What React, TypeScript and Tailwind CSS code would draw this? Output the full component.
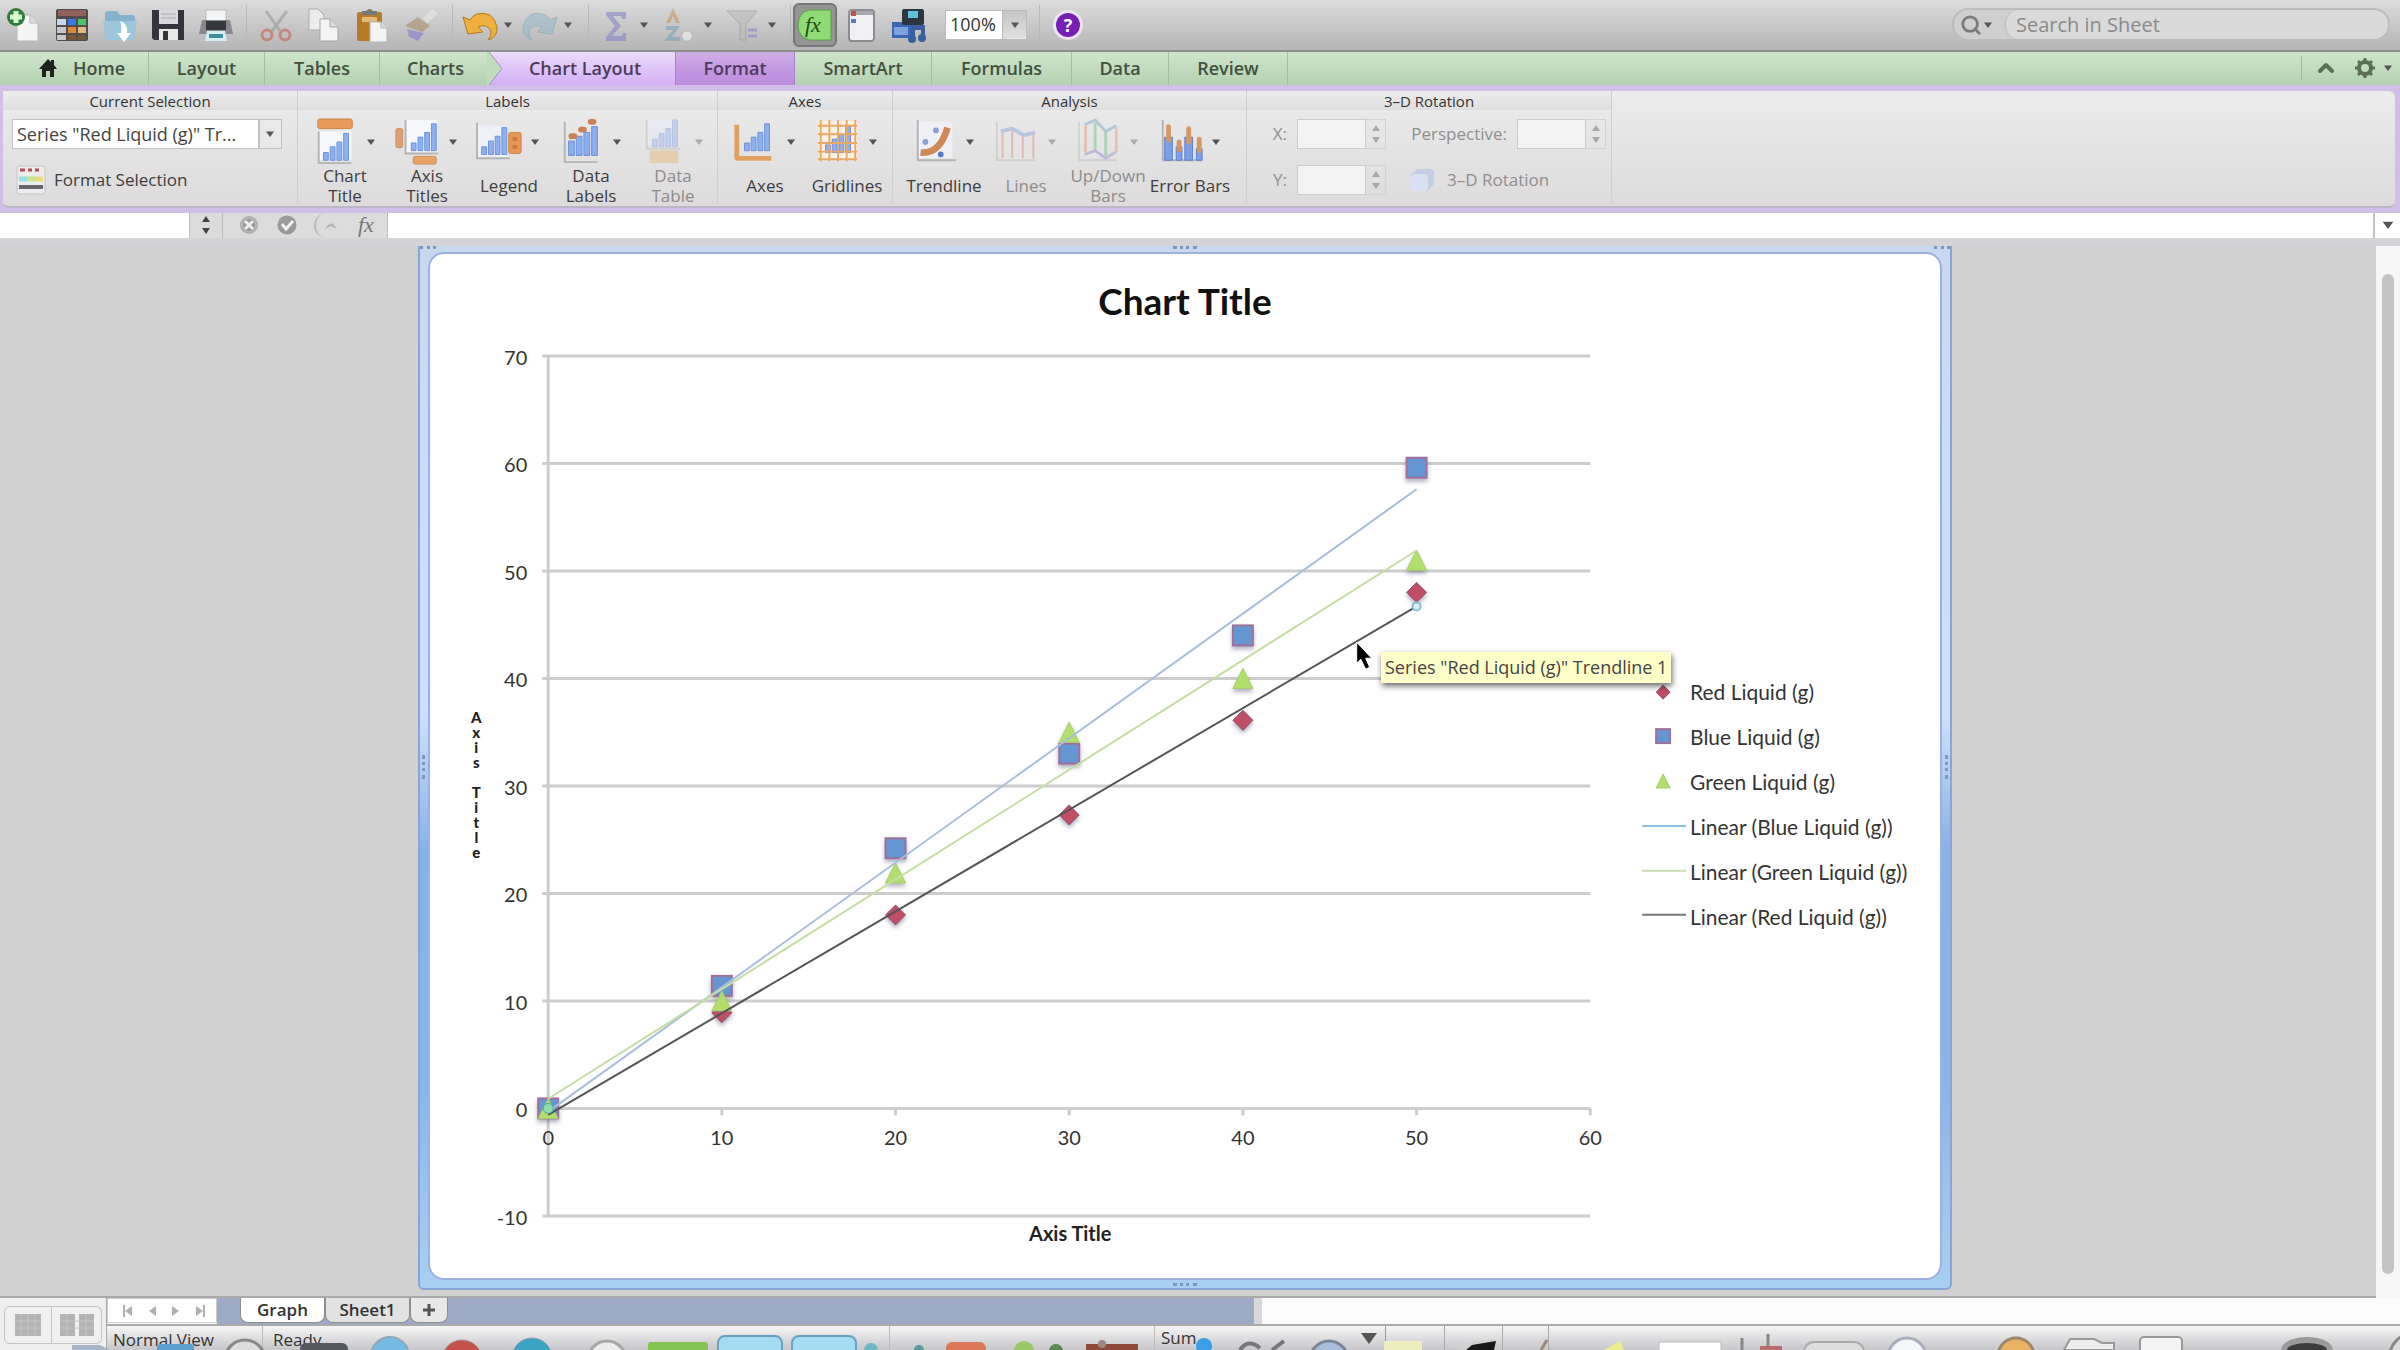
import type { ReactNode } from "react";
import { ChevronUp, Search } from "lucide-react";

const Caret = ({ className = "" }: { className?: string }) => (
  <svg viewBox="0 0 8 6" className={`w-2 h-1.5 shrink-0 ${className}`}>
    <path d="M0 0.5h8L4 6z" fill="#555" />
  </svg>
);

const Steps = ({ className = "" }: { className?: string }) => (
  <svg viewBox="0 0 8 20" className={`w-2 h-5 shrink-0 ${className}`}>
    <path d="M0 7h8L4 1zM0 13h8L4 19z" fill="currentColor" />
  </svg>
);

const Icon = ({ children, faded }: { children: ReactNode; faded?: boolean }) => (
  <svg viewBox="0 0 36 36" className={faded ? "w-9 h-9 shrink-0 opacity-50" : "w-9 h-9 shrink-0"}>
    {children}
  </svg>
);

const Sep = ({ className }: { className: string }) => (
  <div className={`flex justify-center shrink-0 ${className}`}>
    <div className="w-px h-10 bg-[#b9b9b9]" />
  </div>
);

/* ---------- standard toolbar ---------- */

function Tool({ label, children }: { label: string; children: ReactNode }) {
  return (
    <button type="button" aria-label={label} className="w-12 h-12 shrink-0 flex items-center justify-center">
      {children}
    </button>
  );
}

function MenuTool({ label, children, wide }: { label: string; children: ReactNode; wide?: boolean }) {
  return (
    <button type="button" aria-label={label} className="h-12 shrink-0 flex items-center">
      <span className="w-10 flex justify-center">{children}</span>
      <span className={wide ? "w-6 pr-2 flex justify-center" : "w-5 pr-1 flex justify-center"}>
        <Caret />
      </span>
    </button>
  );
}

function Toolbar() {
  return (
    <header className="h-[52px] flex items-center border-b-2 border-[#8d918d] bg-linear-to-b from-[#dcdcdc] to-[#b5b5b5]">
      <Tool label="New">
        <Icon>
          <path d="M11 8h13l8 8v18H11z" fill="#f4f4f4" stroke="#b8b8b8" />
          <path d="M24 8v8h8" fill="#ddd" stroke="#b8b8b8" />
          <circle cx="10" cy="10" r="9" fill="#2f7a3c" />
          <path d="M10 4v12M4 10h12" stroke="#d6ffd0" strokeWidth="5" />
        </Icon>
      </Tool>
      <Tool label="Gallery">
        <Icon>
          <rect x="2" y="2" width="32" height="32" rx="2" fill="#514d4b" />
          <path d="M4 3h28v6H4z" fill="#93605c" />
          <path d="M3 12h9v6H3z" fill="#c9d6f4" />
          <path d="M14 12h8v6h-8z" fill="#3d78e8" />
          <path d="M24 12h8v6h-8z" fill="#47c768" />
          <path d="M3 20h9v6H3zM3 28h9v5H3z" fill="#c8c8cc" />
          <path d="M14 20h8v6h-8z" fill="#d9873c" />
          <path d="M24 20h8v6h-8z" fill="#e6b878" />
          <path d="M14 28h8v5h-8zM24 28h8v5h-8z" fill="#77573a" />
        </Icon>
      </Tool>
      <Tool label="Open">
        <Icon>
          <path d="M3 7q0-3 3-3h9l3 4h12q3 0 3 3v20H3z" fill="#85b3cd" />
          <path d="M1 14h34l-3 19H4z" fill="#9cc6dc" />
          <path d="M18 14q8 2 7 12h4l-7 9-7-9h4q1-7-1-12z" fill="#fff" />
        </Icon>
      </Tool>
      <Tool label="Save">
        <Icon>
          <path d="M2 3h32v30H4l-2-2z" fill="#35343a" />
          <path d="M9 3h19v14H9z" fill="#d9d9dd" />
          <path d="M11 7h15M11 11h15" stroke="#aaa" />
          <path d="M9 22h19v11H9z" fill="#e8e8e8" />
          <path d="M13 24h5v9h-5z" fill="#35343a" />
        </Icon>
      </Tool>
      <Tool label="Print">
        <Icon>
          <path d="M8 3h20v12H8z" fill="#f6f6f6" stroke="#bbb" />
          <path d="M4 13h28l3 14H1z" fill="#87898c" />
          <path d="M8 14h20v9H8z" fill="#35383b" />
          <path d="M9 24h18l2 10H7z" fill="#d9eef4" />
          <path d="M11 27h14v4H11z" fill="#3d8fa0" />
        </Icon>
      </Tool>
      <Sep className="w-3" />
      <Tool label="Cut">
        <Icon faded>
          <path d="M8 4l14 20M29 4L14 24" stroke="#909090" strokeWidth="3" />
          <circle cx="9" cy="28" r="5" fill="none" stroke="#c8503c" strokeWidth="3" />
          <circle cx="27" cy="28" r="5" fill="none" stroke="#c8503c" strokeWidth="3" />
        </Icon>
      </Tool>
      <Tool label="Copy">
        <Icon>
          <path d="M3 2h9l6 6v15H3z" fill="#ececec" stroke="#aaa" />
          <path d="M14 12h10l8 8v14H14z" fill="#f4f4f4" stroke="#a5a5a5" />
          <path d="M24 12v8h8" fill="#ddd" stroke="#a5a5a5" />
        </Icon>
      </Tool>
      <Tool label="Paste">
        <Icon>
          <rect x="3" y="5" width="25" height="29" rx="2" fill="#b97a26" />
          <path d="M8 8h15v-4h-4q-3-4-7 0H8z" fill="#777" />
          <path d="M8 10h15v5H8z" fill="#e0ba76" />
          <path d="M16 15h11l6 6v14H16z" fill="#f4f4f4" stroke="#b5b5b5" />
          <path d="M27 15v6h6" fill="#ddd" stroke="#b5b5b5" />
        </Icon>
      </Tool>
      <Tool label="Format painter">
        <Icon faded>
          <path d="M33 4L23 14" stroke="#eee" strokeWidth="7" />
          <path d="M16 10l12 9-8 6L3 19z" fill="#a08058" />
          <path d="M5 22l17 4-6 8-9-4z" fill="#7f6ad0" />
        </Icon>
      </Tool>
      <Sep className="w-4" />
      <MenuTool label="Undo">
        <Icon>
          <path d="M1 10l5 17 15-2-5-5q9-4 13 4 1 5-3 9 10-3 9-13Q31 3 15 7q-5 2-7 6z" fill="#f0b040" stroke="#b97814" />
        </Icon>
      </MenuTool>
      <MenuTool label="Redo">
        <Icon faded>
          <path d="M35 10l-5 17-15-2 5-5q-9-4-13 4-1 5 3 9-10-3-9-13Q5 3 21 7q5 2 7 6z" fill="#8fb8cb" stroke="#6f9fb6" />
        </Icon>
      </MenuTool>
      <Sep className="w-4" />
      <MenuTool label="AutoSum" wide>
        <Icon faded>
          <path d="M8 5h20v7h-4l-1-3H15l8 10-9 10h10l1-3h3v8H8v-4l9-11L8 8z" fill="#7d78c8" />
        </Icon>
      </MenuTool>
      <MenuTool label="Sort" wide>
        <Icon faded>
          <path d="M4 16L11 1l7 15h-4l-3-7-3 7z" fill="#c88a50" />
          <path d="M4 19h14l-8 11h8v4H2l9-11H4z" fill="#6f9fb6" />
          <path d="M22 24h6l3 5-3 5h-6l-3-5z" fill="#fff" stroke="#aaa" />
        </Icon>
      </MenuTool>
      <MenuTool label="Filter" wide>
        <Icon faded>
          <path d="M1 4h30L20 17v16h-6V17z" fill="#b9b9b9" stroke="#888" />
          <path d="M22 23h9M22 29h9" stroke="#8078c8" strokeWidth="3" />
        </Icon>
      </MenuTool>
      <div className="w-px h-10 mx-0.5 bg-[#b9b9b9]" />
      <button type="button" aria-label="Formula Builder" className="w-11 h-11 rounded-md border-2 border-[#777] bg-[#949494] flex items-center justify-center">
        <svg viewBox="0 0 36 32" className="w-9 h-8">
          <path d="M12 1h22v30H12Q1 28 1 16T12 1z" fill="#8fdb74" stroke="#5d9a48" />
          <text x="8" y="23" fontFamily="Liberation Serif, serif" fontStyle="italic" fontSize="22" fill="#234a1c">fx</text>
        </svg>
      </button>
      <Tool label="Toolbox">
        <Icon>
          <rect x="6" y="3" width="25" height="31" rx="3" fill="#f1f1f4" stroke="#8c8c92" strokeWidth="2" />
          <path d="M6 4h24v4H6z" fill="#a8a8b0" />
          <path d="M8 4h5v5H8z" fill="#c0504d" />
          <path d="M8 12h5v4H8z" fill="#5a78c8" />
        </Icon>
      </Tool>
      <Tool label="Media Browser">
        <Icon>
          <rect x="1" y="15" width="22" height="16" fill="#3a66b4" />
          <rect x="11" y="2" width="22" height="16" rx="2" fill="#2b3640" />
          <rect x="17" y="4" width="10" height="7" fill="#5cc4d8" />
          <path d="M3 20h14v8H3z" fill="#7fa3dd" />
          <path d="M20 18h14v13h-4v-8h-6v9h-4z" fill="#3a5f9c" />
          <circle cx="21" cy="32" r="4" fill="#3a5f9c" />
          <circle cx="31" cy="31" r="4" fill="#3a5f9c" />
        </Icon>
      </Tool>
      <div className="flex items-center ml-3 h-[30px] bg-white border border-[#bbb]">
        <input aria-label="Zoom" defaultValue="100%" className="w-[56px] px-1 text-[18px] text-[#333] outline-none" />
        <button type="button" aria-label="Zoom menu" className="w-6 h-full flex items-center justify-center border-l border-[#bbb] bg-linear-to-b from-[#c4c4c4] to-[#e2e2e2]">
          <Caret />
        </button>
      </div>
      <Sep className="w-6" />
      <button type="button" aria-label="Help" className="ml-0.5 w-[30px] h-[30px] rounded-full border-3 border-[#efe4f7] bg-[#7420b4] text-white text-[18px] leading-none font-bold">
        ?
      </button>
      <div className="ml-auto mr-[10px] flex items-center w-[438px] h-[33px] rounded-full border-2 border-[#bcbcbc] bg-[#cfcfcf]">
        <Search className="ml-1.5 w-[22px] h-[22px] text-[#7b7b7b]" strokeWidth={3} />
        <Caret className="ml-0.5 mr-3" />
        <input
          aria-label="Search in Sheet"
          placeholder="Search in Sheet"
          className="grow min-w-0 h-full rounded-full bg-[#dadada] border-l-2 border-[#c2c2c2] pl-2.5 text-[20px] placeholder:text-[#8a8a8a] outline-none"
        />
      </div>
    </header>
  );
}

/* ---------- ribbon tabs ---------- */

const GREEN = "h-full shrink-0 border-r border-[#a3bf9f] flex items-center justify-center";

function Tabs() {
  return (
    <nav className="h-[33px] flex items-center bg-linear-to-b from-[#d0e5cb] to-[#b2d2b0] text-[18px] font-semibold text-[#41503f]">
      <button type="button" className={`${GREEN} w-[149px] gap-4 pl-4`}>
        <svg viewBox="0 0 18 18" className="w-[18px] h-[18px]">
          <path d="M9 0L0 10h3v8h4v-6h4v6h4v-8h3l-3-4V1h-3v2z" fill="#1c241b" />
        </svg>
        Home
      </button>
      <button type="button" className={`${GREEN} w-[116px]`}>Layout</button>
      <button type="button" className={`${GREEN} w-[115px]`}>Tables</button>
      <button type="button" className="h-full w-[107px] shrink-0 pl-1">Charts</button>
      <button type="button" className="h-full w-[188px] shrink-0 pr-2 flex items-center bg-linear-to-b from-[#ecdcfa] to-[#d3aff5] text-[#4c3a5c]">
        <svg viewBox="0 0 16 33" className="w-4 h-[33px]">
          <path d="M0 0h2l13 16.500L2 33H0z" fill="#bfdcbb" />
          <path d="M2 0l13 16.500L2 33" fill="none" stroke="#a58fc0" />
        </svg>
        <span className="grow">Chart Layout</span>
      </button>
      <button type="button" className="h-full w-[120px] shrink-0 border-x border-[#a882c8] bg-linear-to-b from-[#cfaee6] via-[#c49ae2] to-[#ba8cde] text-[#4c3a5c]">
        Format
      </button>
      <button type="button" className={`${GREEN} w-[137px]`}>SmartArt</button>
      <button type="button" className={`${GREEN} w-[140px]`}>Formulas</button>
      <button type="button" className={`${GREEN} w-[97px]`}>Data</button>
      <button type="button" className={`${GREEN} w-[119px]`}>Review</button>
      <div className="ml-auto flex items-center h-full">
        <button type="button" aria-label="Collapse ribbon" className="h-6 px-3 border-l border-[#9dbb9a]">
          <ChevronUp className="w-6 h-6 text-[#5b6f58]" strokeWidth={4} />
        </button>
        <button type="button" aria-label="Ribbon preferences" className="ml-1 flex items-center gap-2 pr-2">
          <svg viewBox="0 0 22 22" className="w-[22px] h-[22px]" fill="none" stroke="#5b6f58">
            <circle cx="11" cy="11" r="6" strokeWidth="4" />
            <path d="M11 1v4M11 17v4M1 11h4M17 11h4M4 4l3 3M15 15l3 3M18 4l-3 3M7 15l-3 3" strokeWidth="3" />
          </svg>
          <Caret />
        </button>
      </div>
    </nav>
  );
}

/* ---------- ribbon ---------- */

const Bars = ({ x = 0, y = 0 }: { x?: number; y?: number }) => (
  <g transform={`translate(${x} ${y})`} fill="#8fb0ee" stroke="#6a90dc">
    <path d="M1 22h5v8H1z" />
    <path d="M8 16h5v14H8z" />
    <path d="M15 11h5v19h-5z" />
    <path d="M22 2h5v28h-5z" />
  </g>
);

const Frame = ({ d }: { d: string }) => <path d={d} fill="none" stroke="#b4b4b4" strokeWidth="2" />;

const ICONS: Record<string, ReactNode> = {
  chartTitle: (
    <>
      <rect x="6" y="1" width="36" height="10" rx="2" fill="#e89c5c" stroke="#d08444" />
      <path d="M7 14h34v30H7z" fill="#f6f8fc" />
      <Frame d="M7 14v33h34" />
      <Bars x={11} y={14} />
    </>
  ),
  axisTitles: (
    <>
      <rect x="2" y="11" width="7" height="20" rx="2" fill="#e0a070" stroke="#c89068" />
      <path d="M13 2h32v34H13z" fill="#f6f8fc" />
      <Frame d="M12 2v35h34" />
      <Bars x={17} y={4} />
      <rect x="20" y="40" width="24" height="8" rx="2" fill="#e8a468" stroke="#d08c54" />
    </>
  ),
  legend: (
    <>
      <path d="M1 8h32v34H1z" fill="#eef1f8" />
      <Frame d="M1 5v37h34" />
      <Bars x={5} y={8} />
      <rect x="34" y="15" width="13" height="22" rx="2" fill="#e49858" stroke="#d08848" />
      <path d="M38 20h5v4h-5zM38 28h5v4h-5z" fill="#c8763c" />
    </>
  ),
  dataLabels: (
    <>
      <Frame d="M7 4v42h34" />
      <path d="M11 24h6v15h-6zM19 19h6v20h-6zM27 15h6v24h-6zM35 9h6v30h-6z" fill="#8aaeee" stroke="#6a90dc" />
      <g fill="#cc8058">
        <rect x="11" y="16" width="9" height="6" rx="3" />
        <rect x="21" y="9" width="9" height="6" rx="3" />
        <rect x="31" y="1" width="9" height="6" rx="3" />
      </g>
    </>
  ),
  dataTable: (
    <>
      <path d="M8 2h34v26H8z" fill="#e8eefa" />
      <Frame d="M7 2v30h35" />
      <Bars x={12} />
      <rect x="10" y="34" width="30" height="13" fill="#e8b060" />
    </>
  ),
  axes: (
    <>
      <path d="M5 7v34q0 1 1 1h35" fill="none" stroke="#e0a060" strokeWidth="5" />
      <Bars x={12} y={4} />
    </>
  ),
  gridlines: (
    <>
      <path d="M5 3h40v41H5z" fill="#fdf1e4" />
      <Bars x={11} y={6} />
      <path d="M4 8h41M4 17h41M4 26h41M4 35h41M4 43h41M7 2v43M16 2v43M25 2v43M34 2v43M43 2v43" stroke="#e8a868" strokeWidth="2" />
    </>
  ),
  trendline: (
    <>
      <path d="M7 4h36v38H7z" fill="#efeff4" />
      <Frame d="M7 2v42h40" />
      <path d="M10 36q20 2 28-26" fill="none" stroke="#cf8858" strokeWidth="7" />
      <circle cx="15" cy="25" r="3" fill="#8aa0d8" />
      <circle cx="26" cy="13" r="3" fill="#8aa0d8" />
      <circle cx="31" cy="38" r="3" fill="#5a7cd0" />
    </>
  ),
  lines: (
    <>
      <Frame d="M4 4v40h40" />
      <path d="M8 14l12-3 12 7 12-3" fill="none" stroke="#7a98d8" strokeWidth="4" />
      <path d="M10 16v26M20 13v29M31 19v23M42 17v25" stroke="#dc7868" strokeWidth="2" />
    </>
  ),
  upDown: (
    <>
      <Frame d="M4 4v40h40" />
      <path d="M10 7l11-5 11 12 11-6" fill="none" stroke="#5aa0c8" strokeWidth="3" />
      <path d="M10 38l11-4 11 8 11-7" fill="none" stroke="#8a78d0" strokeWidth="3" />
      <path d="M11 8v28M43 10v26" stroke="#e09060" strokeWidth="3" />
      <path d="M21 5v28M32 14v26" stroke="#60b878" strokeWidth="3" />
    </>
  ),
  errorBars: (
    <>
      <Frame d="M6 2v42h41" />
      <path d="M8 20h8v24H8zM20 30h6v14h-6zM29 20h8v24h-8zM41 32h6v12h-6z" fill="#7c9fe8" stroke="#5c80d0" />
      <path d="M12 9v14M23 25v8M33 11v14M44 22v12" stroke="#d69860" strokeWidth="5" strokeLinecap="round" />
    </>
  ),
};

function RibbonButton({ label, icon, disabled }: { label: ReactNode; icon: string; disabled?: boolean }) {
  return (
    <button type="button" disabled={disabled} className={disabled ? "w-[82px] shrink-0 text-[#8c8c8c]" : "w-[82px] shrink-0 text-[#3d3d3d]"}>
      <span className={disabled ? "flex items-center pl-2 opacity-40" : "flex items-center pl-2"}>
        <svg viewBox="0 0 50 50" className="w-12 h-12">{ICONS[icon]}</svg>
        <span className="w-[22px] flex justify-center">
          <Caret />
        </span>
      </span>
      <span className="h-10 flex flex-col items-center justify-center leading-5 whitespace-nowrap">{label}</span>
    </button>
  );
}

function Group({ title, className, children }: { title: string; className: string; children: ReactNode }) {
  return (
    <section className={`h-[112px] shrink-0 border-r border-[#cfcfcf] ${className}`}>
      <h2 className="h-[19px] text-center text-[15px] leading-[20px] text-[#333] bg-linear-to-b from-[#ececec] to-[#dedede]">{title}</h2>
      {children}
    </section>
  );
}

function SpinBox({ label, id }: { label: string; id: string }) {
  return (
    <>
      <label htmlFor={id} className="text-[#8f8f8f] text-right">{label}</label>
      <span className="flex items-center">
        <input id={id} disabled className="w-[69px] h-[30px] bg-[#f3f3f3] border border-[#cdcdcd]" />
        <span className="w-5 flex justify-center border border-l-0 border-[#d3d3d3] h-[30px] items-center">
          <Steps className="text-[#a8a8a8]" />
        </span>
      </span>
    </>
  );
}

function Ribbon() {
  return (
    <div className="bg-[#d2bfe9] pt-1.5 pb-[5px] pl-[3px] pr-[5px]">
      <div className="h-[117px] flex rounded-md bg-linear-to-b from-[#ececec] to-[#dddbdc] border-b-2 border-[#bdb6c4] text-[17px]">
        <Group title="Current Selection" className="w-[295px]">
          <div className="mt-[9px] ml-[9px] flex flex-col gap-4">
            <div className="relative w-[270px]">
              <select aria-label="Chart element" className="appearance-none w-full h-[30px] px-1 border border-[#c2c2c2] text-[18px] leading-[28px] text-[#444] bg-[linear-gradient(90deg,white_245px,#c4c4c4_245px,#c4c4c4_247px,#e9e9e9_247px)]">
                <option>Series "Red Liquid (g)" Tr...</option>
              </select>
              <Caret className="absolute right-2 top-3 pointer-events-none" />
            </div>
            <button type="button" className="flex items-center gap-2 px-1 text-[#3d3d3d]">
              <svg viewBox="0 0 30 30" className="w-[30px] h-[30px]">
                <rect x="1" y="1" width="28" height="28" rx="2" fill="#ececec" stroke="#c4c4c4" />
                <path d="M4 5h5M12 5h4M19 5h4" stroke="#b04a54" strokeWidth="3" />
                <path d="M3 14h8" stroke="#9adfe0" strokeWidth="5" />
                <path d="M11 14h8" stroke="#c9e28c" strokeWidth="5" />
                <path d="M19 14h8" stroke="#e8dc80" strokeWidth="5" />
                <path d="M3 22h24" stroke="#66686e" strokeWidth="4" />
              </svg>
              Format Selection
            </button>
          </div>
        </Group>
        <Group title="Labels" className="w-[420px]">
          <div className="flex pt-2 pl-1.5">
            <RibbonButton icon="chartTitle" label={<><span>Chart</span><span>Title</span></>} />
            <RibbonButton icon="axisTitles" label={<><span>Axis</span><span>Titles</span></>} />
            <RibbonButton icon="legend" label="Legend" />
            <RibbonButton icon="dataLabels" label={<><span>Data</span><span>Labels</span></>} />
            <RibbonButton icon="dataTable" label={<><span>Data</span><span>Table</span></>} disabled />
          </div>
        </Group>
        <Group title="Axes" className="w-[175px]">
          <div className="flex pt-2 pl-1.5">
            <RibbonButton icon="axes" label="Axes" />
            <RibbonButton icon="gridlines" label="Gridlines" />
          </div>
        </Group>
        <Group title="Analysis" className="w-[354px]">
          <div className="flex pt-2 pl-2.5">
            <RibbonButton icon="trendline" label="Trendline" />
            <RibbonButton icon="lines" label="Lines" disabled />
            <RibbonButton icon="upDown" label={<><span>Up/Down</span><span>Bars</span></>} disabled />
            <RibbonButton icon="errorBars" label="Error Bars" />
          </div>
        </Group>
        <Group title="3–D Rotation" className="w-[365px]">
          <div className="mt-[9px] px-1.5 grid grid-cols-[34px_90px_110px_90px] gap-x-2.5 gap-y-4 items-center">
            <SpinBox id="rot-x" label="X:" />
            <SpinBox id="perspective" label="Perspective:" />
            <SpinBox id="rot-y" label="Y:" />
            <button type="button" disabled className="col-span-2 pl-3 flex items-center gap-3 text-[#8f8f8f]">
              <svg viewBox="0 0 26 26" className="w-[26px] h-[26px]">
                <path d="M8 2h13q4 0 4 4v11l-6 7H5q-4 0-4-4V8z" fill="#c4cfe4" />
                <rect x="1" y="7" width="18" height="17" rx="4" fill="#d9e1f0" />
              </svg>
              3–D Rotation
            </button>
          </div>
        </Group>
      </div>
    </div>
  );
}

function FormulaBar() {
  return (
    <div className="h-[33px] flex border-b-8 border-[#d3d3d8] bg-[#dcdcdc]">
      <input aria-label="Name box" className="w-[189px] bg-white outline-none" />
      <button type="button" aria-label="Name box steps" className="w-[34px] flex justify-center items-center border-x border-[#bdbdbd] text-[#444]">
        <Steps />
      </button>
      <div className="w-[165px] flex items-center pl-[15px] border-r border-[#bdbdbd]">
        <button type="button" aria-label="Cancel">
          <svg viewBox="0 0 22 22" className="w-[22px] h-[22px]">
            <circle cx="11" cy="11" r="9" fill="#aaa" />
            <circle cx="11" cy="11" r="7" fill="#999" stroke="#c9c9c9" />
            <path d="M7 7l8 8M15 7l-8 8" stroke="#eee" strokeWidth="3" />
          </svg>
        </button>
        <button type="button" aria-label="Enter" className="ml-4">
          <svg viewBox="0 0 22 22" className="w-[22px] h-[22px]">
            <circle cx="11" cy="11" r="9.500" fill="#9a9a9a" />
            <path d="M6 10l4 5 7-8" fill="none" stroke="#f2f2f2" strokeWidth="3" />
          </svg>
        </button>
        <button type="button" aria-label="Functions" className="ml-4 flex items-center h-[25px] rounded-l-full border-l-2 border-[#b9b9b9] pl-2">
          <svg viewBox="0 0 14 10" className="w-3.5 h-2.5">
            <path d="M1 9Q7-2 13 9l-6-3z" fill="#b5b5b5" />
          </svg>
        </button>
        <button type="button" className="ml-5 font-['Liberation_Serif',serif] italic text-[22px] leading-none text-[#777]">fx</button>
      </div>
      <input aria-label="Formula" className="grow min-w-0 bg-white outline-none" />
      <button type="button" aria-label="Expand formula bar" className="w-[27px] flex items-center justify-center border-l-2 border-[#c4c4c4] bg-white">
        <Caret className="w-3! h-2!" />
      </button>
    </div>
  );
}

/* ---------- chart ---------- */

const px = (x: number) => 115 + x * 17.4;
const py = (y: number) => 856 - y * 10.77;

const X_VALUES = [0, 10, 20, 30, 40, 50];
const RED = [0, 8.9, 18, 27.3, 36.1, 48];
const BLUE = [0, 11.4, 24.2, 33, 44, 59.6];
const GREEN_DATA = [0, 10, 21.9, 35, 40, 51];

const Diamond = ({ x, y, r }: { x: number; y: number; r: number }) => (
  <path d={`M${x} ${y - r}L${x + r} ${y}L${x} ${y + r}L${x - r} ${y}Z`} fill="#c04f66" stroke="#8f5070" />
);

const Square = ({ x, y, r }: { x: number; y: number; r: number }) => (
  <rect x={x - r} y={y - r} width={r * 2} height={r * 2} fill="#6496d2" stroke="#a0709a" strokeWidth="2" />
);

const Triangle = ({ x, y, r }: { x: number; y: number; r: number }) => (
  <path d={`M${x} ${y - r}L${x + r} ${y + r}L${x - r} ${y + r}Z`} fill="#b2df6c" stroke="#a3ce68" />
);

function Chart() {
  return (
    <svg viewBox="0 0 1506 1026" className="w-full h-full font-[Lato,sans-serif]">
      <defs>
        <filter id="drop" x="-30%" y="-30%" width="160%" height="170%">
          <feDropShadow dx="0" dy="3" stdDeviation="2" floodColor="#555577" floodOpacity="0.45" />
        </filter>
      </defs>
      <text x="753" y="61" textAnchor="middle" fontSize="37" fontWeight="700" fill="#111">Chart Title</text>

      {[70, 60, 50, 40, 30, 20, 10, 0, -10].map((v) => (
        <g key={v}>
          <path d={`M109 ${py(v)}H1159`} stroke="#cdcdcd" strokeWidth="3" />
          <text x="94" y={py(v) + 9} textAnchor="end" fontSize="20" fill="#333">{v}</text>
        </g>
      ))}
      <path d={`M115 ${py(70)}V${py(-10)}`} stroke="#cdcdcd" strokeWidth="3" />
      {[0, 10, 20, 30, 40, 50, 60].map((v) => (
        <g key={v}>
          <path d={`M${px(v)} 856v7`} stroke="#cdcdcd" strokeWidth="3" />
          <text x={px(v)} y="893" textAnchor="middle" fontSize="20" fill="#333">{v}</text>
        </g>
      ))}

      <g filter="url(#drop)">
        {X_VALUES.map((x, i) => <Diamond key={x} x={px(x)} y={py(RED[i])} r={10} />)}
        {X_VALUES.map((x, i) => <Square key={x} x={px(x)} y={py(BLUE[i])} r={10} />)}
        {X_VALUES.map((x, i) => <Triangle key={x} x={px(x)} y={py(GREEN_DATA[i])} r={10} />)}
      </g>

      <g fill="none" strokeWidth="2">
        <path d={`M${px(0)} ${py(-0.3)}L${px(50)} ${py(57.6)}`} stroke="#a9bddf" />
        <path d={`M${px(0)} ${py(0.9)}L${px(50)} ${py(51.9)}`} stroke="#c5dea3" />
        <path d={`M${px(0)} ${py(-0.6)}L${px(50)} ${py(46.7)}`} stroke="#555" />
      </g>
      <circle cx={px(0)} cy={py(0)} r="5" fill="#8fdcae" stroke="#4fa5a0" />
      <circle cx={px(50)} cy={py(46.7)} r="4" fill="#d8f2fa" stroke="#88bccf" strokeWidth="2" />

      <text x="638" y="989" textAnchor="middle" fontSize="20" fontWeight="700" fill="#222">Axis Title</text>
      <g fontSize="15" fontWeight="900" fill="#222" textAnchor="middle">
        {[..."Axis Title"].map((c, i) => (
          <text key={i} x="43" y={470 + i * 15}>{c}</text>
        ))}
      </g>

      <Diamond x={1232} y={439} r={7} />
      <Square x={1232} y={483} r={7} />
      <Triangle x={1232} y={528} r={7} />
      <path d="M1211 573h44" stroke="#8fc0e0" strokeWidth="2" />
      <path d="M1211 618h44" stroke="#cbdcae" strokeWidth="2" />
      <path d="M1211 662h44" stroke="#777" strokeWidth="2" />
      <g fontSize="21" fill="#333">
        <text x="1259" y="447">Red Liquid (g)</text>
        <text x="1259" y="492">Blue Liquid (g)</text>
        <text x="1259" y="537">Green Liquid (g)</text>
        <text x="1259" y="582">Linear (Blue Liquid (g))</text>
        <text x="1259" y="627">Linear (Green Liquid (g))</text>
        <text x="1259" y="672">Linear (Red Liquid (g))</text>
      </g>

      <path d="M925 389v21l4-4 5 10 4-2-4-9h6z" fill="#000" stroke="#fff" />
    </svg>
  );
}

function Grip({ className }: { className: string }) {
  return <div aria-hidden="true" className={`absolute border-dotted border-[#7d97c0] ${className}`} />;
}

function Canvas() {
  return (
    <main className="grow flex min-h-0">
      <div className="grow flex bg-[#d1d1d1] border-b-2 border-[#aaa] pb-1.5 pr-1.5">
        <div className="relative w-[1534px] mx-auto flex border-2 border-t-0 border-[#88a5d8] rounded-b-md bg-[linear-gradient(180deg,#c8d8f1_0%,#cce0fc_45%,#88b2e8_58%,#8ab4ea_80%,#a9d0f2_100%)] pt-1.5 px-2 pb-2">
          <div className="relative grow rounded-2xl bg-white border-2 border-[#9db1de] px-0.5">
            <Chart />
            <div role="tooltip" className="absolute left-[951px] top-[398px] h-[31px] px-1 whitespace-nowrap bg-[#fefec9] text-[18px] leading-[31px] text-[#444] shadow-[1px_3px_6px_rgba(0,0,0,0.6)]">
              Series "Red Liquid (g)" Trendline 1
            </div>
          </div>
          <Grip className="top-0 left-1/2 -translate-x-1/2 w-6 border-t-3" />
          <Grip className="bottom-0.5 left-1/2 -translate-x-1/2 w-6 border-t-3" />
          <Grip className="left-0.5 top-1/2 -translate-y-1/2 h-6 border-l-3" />
          <Grip className="right-0.5 top-1/2 -translate-y-1/2 h-6 border-l-3" />
          <Grip className="left-0 top-0 w-4 border-t-3" />
          <Grip className="right-0 top-0 w-4 border-t-3" />
        </div>
      </div>
      <div className="w-6 shrink-0 bg-[#f6f6f6] pt-7 pb-6 flex justify-center">
        <div className="w-3 rounded-full bg-[#c4c4c4]" />
      </div>
    </main>
  );
}

/* ---------- bottom bars ---------- */

function Dock() {
  return (
    <svg viewBox="0 0 2400 24" preserveAspectRatio="xMidYMax slice" aria-hidden="true" className="absolute left-0 bottom-0 w-full h-6">
      <path d="M72 24V19h28l10 5z" fill="#a8b4c8" />
      <rect x="157" y="18" width="37" height="20" rx="4" fill="#5f9fd0" />
      <circle cx="245" cy="34" r="20" fill="#dcdcdc" stroke="#888" strokeWidth="3" />
      <rect x="300" y="17" width="48" height="20" rx="6" fill="#55585e" />
      <circle cx="390" cy="30" r="19" fill="#74bce4" stroke="#94a8b8" strokeWidth="2" />
      <circle cx="462" cy="34" r="20" fill="#c4524c" stroke="#a49090" />
      <circle cx="532" cy="32" r="20" fill="#3ba3c4" stroke="#8fa0a8" />
      <circle cx="607" cy="34" r="19" fill="#ececec" stroke="#a5a5a5" strokeWidth="3" />
      <rect x="648" y="16" width="60" height="20" rx="3" fill="#84c452" />
      <rect x="718" y="10" width="64" height="20" rx="7" fill="#a4dcf2" stroke="#6d9fc0" strokeWidth="2" />
      <rect x="792" y="10" width="64" height="20" rx="7" fill="#a4dcf2" stroke="#6d9fc0" strokeWidth="2" />
      <circle cx="871" cy="24" r="7" fill="#6fb6c6" />
      <circle cx="919" cy="24" r="5" fill="#5f98a0" />
      <rect x="946" y="16" width="40" height="20" rx="6" fill="#da7858" />
      <circle cx="1024" cy="25" r="10" fill="#98c864" />
      <circle cx="1056" cy="25" r="7" fill="#5a8a50" />
      <path d="M1086 18h52v6h-52z" fill="#8f4a3c" />
      <circle cx="1102" cy="18" r="4" fill="#9f8484" />
      <circle cx="1204" cy="20" r="8" fill="#3c9ee6" />
      <path d="M1240 24q8-12 20-2M1272 24l12-9" fill="none" stroke="#77777f" strokeWidth="4" />
      <circle cx="1329" cy="34" r="19" fill="#a8bfdc" stroke="#7c8698" strokeWidth="3" />
      <path d="M1384 15h38v9h-38z" fill="#eceebe" />
      <path d="M1445 20l50-7v11h-30z" fill="#d0d0d0" />
      <path d="M1466 24l6-5 24-4-2 9z" fill="#181818" />
      <path d="M1541 24l6-10" stroke="#998877" strokeWidth="3" />
      <path d="M1604 24l16-9 4 9z" fill="#eeea90" />
      <rect x="1659" y="16" width="62" height="20" fill="#fff" stroke="#bbb" />
      <path d="M1742 12v12M1768 8v12" stroke="#888" strokeWidth="3" />
      <path d="M1760 20h22v4h-22z" fill="#b86c70" />
      <rect x="1804" y="16" width="60" height="20" rx="10" fill="#ddd" stroke="#aaa" strokeWidth="2" />
      <circle cx="1907" cy="31" r="19" fill="#f4f6fa" stroke="#a9acba" strokeWidth="3" />
      <circle cx="2016" cy="30" r="18" fill="#ecb264" stroke="#9a8870" strokeWidth="3" />
      <path d="M2064 24l6-11h24l8 4h12v7z" fill="#eee" stroke="#999" strokeWidth="2" />
      <rect x="2140" y="11" width="42" height="20" rx="4" fill="#f4f4f4" stroke="#999" strokeWidth="2" />
      <ellipse cx="2307" cy="24" rx="26" ry="13" fill="#9a9a9a" />
      <ellipse cx="2307" cy="24" rx="20" ry="7" fill="#3c3c3c" />
      <circle cx="2412" cy="30" r="22" fill="#ddd" stroke="#888" strokeWidth="3" />
    </svg>
  );
}

const SHEET = "h-[25px] flex items-center justify-center border border-t-0 border-[#8d8d8d] rounded-b-lg";

function Footer() {
  return (
    <footer className="relative flex text-[17px] text-[#333]">
      <div className="w-[107px] shrink-0 h-[52px] bg-[#efefef] border-r border-[#aaa] pt-2 pl-1 flex items-start">
        <button type="button" aria-label="Normal View" className="w-12 h-[38px] flex items-center justify-center border border-[#c4c4c4] rounded-l-md bg-[#f1f1f1]">
          <svg viewBox="0 0 26 22" className="w-[26px] h-[22px]">
            <path d="M0 0h26v22H0z" fill="#b4b4b4" />
            <path d="M6 0v22M13 0v22M20 0v22M0 7h26M0 14h26" stroke="#c4c4c4" />
          </svg>
        </button>
        <button type="button" aria-label="Page Layout View" className="w-[50px] h-[38px] flex items-center justify-center border border-l-0 border-[#c4c4c4] rounded-r-md bg-[#f1f1f1]">
          <svg viewBox="0 0 34 22" className="w-[34px] h-[22px]">
            <path d="M0 0h15v22H0zM19 0h15v22H19z" fill="#b4b4b4" />
            <path d="M7 0v22M26 0v22M0 7h34M0 14h34" stroke="#c4c4c4" />
          </svg>
        </button>
      </div>
      <div className="grow min-w-0">
        <div className="h-7 flex items-start border-b-2 border-[#aaa] bg-[#fbfbfb]">
          <div className="w-[110px] h-[25px] shrink-0 pl-1 flex items-center justify-center gap-3.5 bg-white border border-[#ccc]">
            {["First", "Previous", "Next", "Last"].map((name, i) => (
              <button key={name} type="button" aria-label={`${name} sheet`}>
                <svg viewBox="0 0 10 12" className="w-2.5 h-3">
                  <path d={i < 2 ? "M9 1v10L2 6z" : "M1 1v10l7-5z"} fill="#b0b0b0" />
                  {i === 0 && <path d="M1 0v12" stroke="#b0b0b0" strokeWidth="2" />}
                  {i === 3 && <path d="M9 0v12" stroke="#b0b0b0" strokeWidth="2" />}
                </svg>
              </button>
            ))}
          </div>
          <div className="w-[1045px] h-full shrink-0 pl-[23px] flex items-start bg-[#9fabc6] border-r-8 border-[#d9d9dc]">
            <button type="button" className={`${SHEET} w-[85px] bg-white font-semibold`}>Graph</button>
            <button type="button" className={`${SHEET} w-[85px] bg-[#e2e2e2] font-semibold`}>Sheet1</button>
            <button type="button" aria-label="Add sheet" className={`${SHEET} w-[38px] bg-[#e8e8e8]`}>
              <svg viewBox="0 0 12 12" className="w-3 h-3">
                <path d="M6 0v12M0 6h12" stroke="#555" strokeWidth="3" />
              </svg>
            </button>
          </div>
        </div>
        <div className="h-6 flex overflow-hidden bg-linear-to-b from-[#f6f6f6] to-[#c6c6ca] leading-[28px]">
          <span className="w-[156px] shrink-0 pl-1.5 border-r border-[#bbb]">Normal View</span>
          <span className="w-[627px] shrink-0 pl-2.5 border-r border-[#bbb]">Ready</span>
          <span className="w-[265px] shrink-0 border-r border-[#bbb]" />
          <span className="w-[231px] shrink-0 pl-1.5 pr-2 flex items-center justify-between border-r border-[#999]">
            <span>Sum</span>
            <Caret className="w-4! h-3!" />
          </span>
          <span className="w-[59px] shrink-0 border-r border-[#aaa]" />
          <span className="w-[58px] shrink-0 border-r border-[#aaa]" />
          <span className="w-[46px] shrink-0 border-r border-[#aaa]" />
        </div>
      </div>
      <Dock />
    </footer>
  );
}

export default function App() {
  return (
    <div className="h-screen flex flex-col overflow-hidden bg-[#d1d1d1] font-['Open_Sans',sans-serif]">
      <Toolbar />
      <Tabs />
      <Ribbon />
      <FormulaBar />
      <Canvas />
      <Footer />
    </div>
  );
}
